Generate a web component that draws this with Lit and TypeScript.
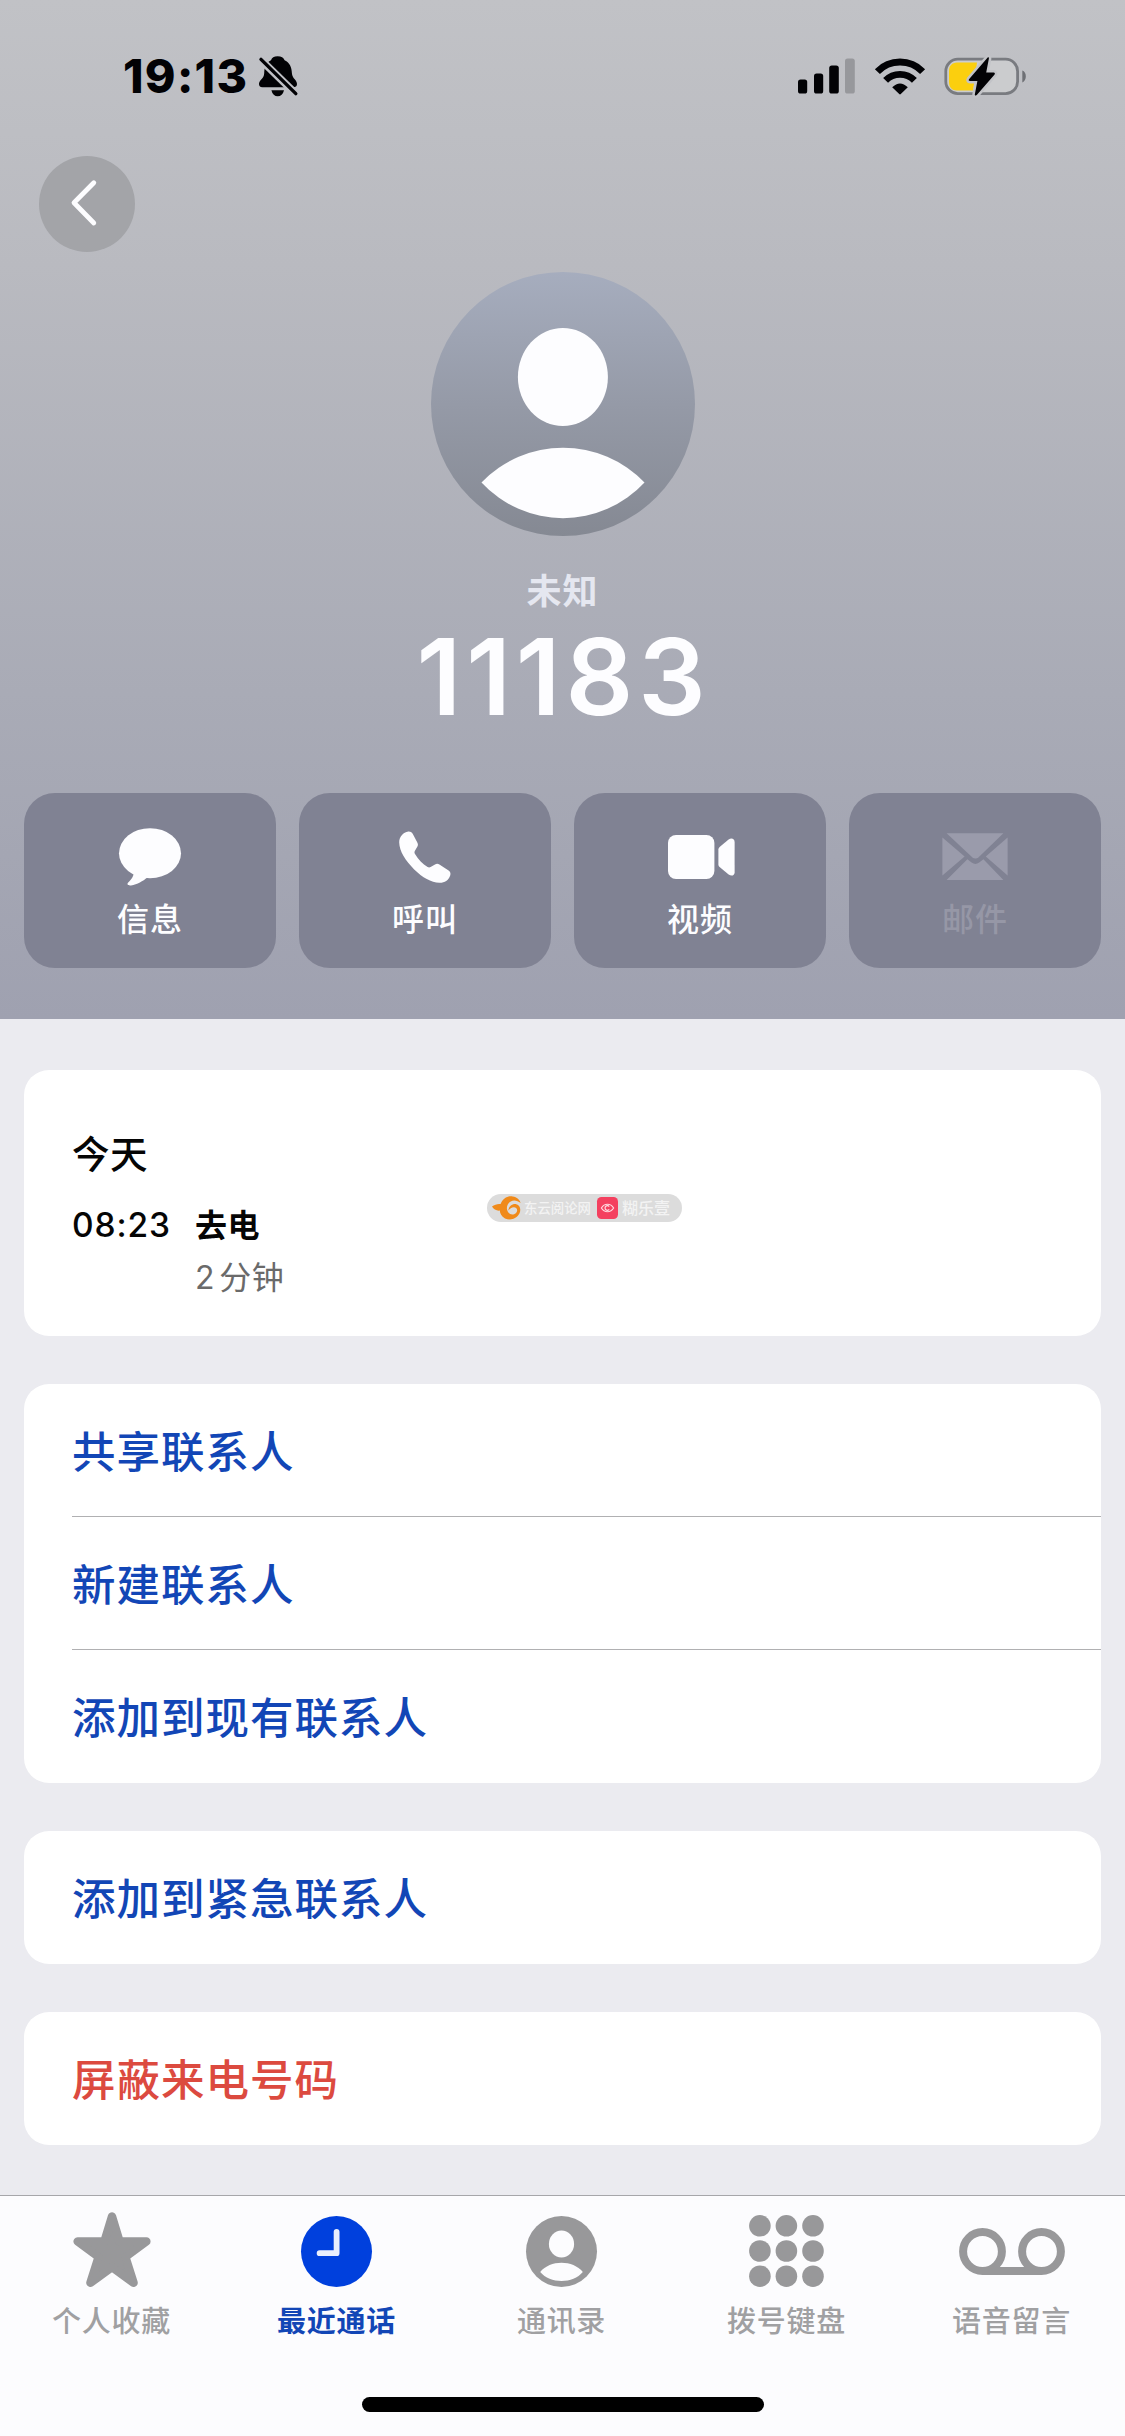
import { LitElement, html, css, svg, SVGTemplateResult } from "lit";
import { customElement } from "lit/decorators.js";
import { classMap } from "lit/directives/class-map.js";

interface Glyph {
  w: number;
  h: number;
  body: SVGTemplateResult;
}

const glyphs: Record<string, Glyph> = {
  bell: {
    w: 39,
    h: 41,
    body: svg`
      <path d="M18.6 0.2C22.4 0.2 24.6 1.8 25.6 4.2C31 6.6 32.6 11.4 32.9 17.2C33.2 22.6 37.9 23.6 38 28C38 30.2 36.6 31.3 34.2 31.3H3.4C1 31.3 -0.2 29.8 0 27.6C0.6 23.6 4.9 22.8 5.2 17.2C5.4 11.2 6.8 6.6 12 4.2C12.8 1.8 15 0.2 18.6 0.2Z"/>
      <path d="M12.4 34.2H25C24 38.2 21.8 40.2 18.7 40.2C15.6 40.2 13.4 38.2 12.4 34.2Z"/>
      <path d="M-2 0L40 41" stroke="#bfc0c5" stroke-width="7.6"/>
      <path d="M2 3.4L36.8 37.6" stroke="currentColor" stroke-width="3.4" stroke-linecap="round"/>`,
  },
  signal: {
    w: 58,
    h: 36,
    body: svg`
      <rect x="0" y="21.5" width="9.2" height="14" rx="2.6"/>
      <rect x="16" y="15.5" width="9.2" height="20" rx="2.6"/>
      <rect x="31.2" y="7.5" width="9.6" height="28" rx="2.6"/>
      <rect x="47" y="0.5" width="9.8" height="35" rx="2.6" fill="#97989c"/>`,
  },
  wifi: {
    w: 50,
    h: 37,
    body: svg`
      <g fill="none" stroke="currentColor" stroke-width="7">
        <path d="M2.4 13.6A31.6 31.6 0 0 1 47.6 13.6"/>
        <path d="M10.6 22.4A20 20 0 0 1 39.4 22.4" stroke-width="6.8"/>
      </g>
      <path d="M17.2 29.2Q25 21.6 32.8 29.2L25.8 36Q25 36.8 24.2 36Z"/>`,
  },
  battery: {
    w: 83,
    h: 39,
    body: svg`
      <rect x="1.8" y="2.2" width="71.8" height="34.4" rx="12" fill="#cbccce" stroke="#797b80" stroke-width="2.8"/>
      <path d="M13 5.5H33L29 33.5H13C8 33.5 5 30 5 25V14C5 9 8 5.5 13 5.5Z" fill="#fbcf0e"/>
      <path d="M78.3 13.6C83 15 83 24 78.3 25.4Z" fill="#6e7075"/>
      <path d="M43.7 0.6L25 22.3C24.4 23.2 24.8 24 26 24H33.4L30.8 37.4C30.8 38.8 32 39 33 37.8L50.6 17.4C51.2 16.4 50.8 15.6 49.6 15.6H42.2L44.9 1.6C45 0.4 44.4 0 43.7 0.6Z" stroke="#c2c3c7" stroke-width="5" paint-order="stroke"/>`,
  },
  back: {
    w: 26,
    h: 46,
    body: svg`<path d="M22.8 2.8L3 22.8L22.8 43" fill="none" stroke="currentColor" stroke-width="4.8" stroke-linecap="round" stroke-linejoin="round"/>`,
  },
  avatar: {
    w: 264,
    h: 264,
    body: svg`
      <defs>
        <linearGradient id="disc" x1="0" y1="0" x2="0" y2="1">
          <stop offset="0" stop-color="#a6adbe"/>
          <stop offset="0.5" stop-color="#959aa7"/>
          <stop offset="1" stop-color="#858993"/>
        </linearGradient>
      </defs>
      <circle cx="132" cy="132" r="132" fill="url(#disc)"/>
      <ellipse cx="131.9" cy="105" rx="45" ry="49"/>
      <path d="M50.5 210.5A113 113 0 0 1 213.5 210.5A111 111 0 0 1 50.5 210.5Z"/>`,
  },
  message: {
    w: 62,
    h: 58,
    body: svg`
      <ellipse cx="31" cy="25.2" rx="31" ry="25"/>
      <path d="M14.4 44C15.4 48 12 51.6 9.2 54.6C7.6 56.4 9 57.8 12 57.4C18.6 56.4 23.6 53 28.4 49.4Z"/>`,
  },
  phone: {
    w: 52,
    h: 52,
    body: svg`<path d="M9.4 0.5C11 0.3 12.6 1 13.7 2.8L18.3 11.6C19.2 13.2 19.1 14.4 18.3 15.8L15.8 20C15.3 21 15.4 22 16 23C19.4 28.6 23.6 32.8 28.6 36C29.6 36.6 30.6 36.6 31.6 36L36 33.4C37.6 32.5 39 32.6 40.4 33.5L49.6 39.4C51.4 40.6 51.9 42.4 51.2 44.4C49.4 49.2 45.8 51.8 40.4 51.7C32.2 51.5 23.4 46.4 15.2 38.4C6.6 30 0.4 20.4 0.2 11.6C0.1 6 4.2 1 9.4 0.5Z"/>`,
  },
  video: {
    w: 64,
    h: 44,
    body: svg`
      <rect x="0" y="0" width="46.4" height="44" rx="8"/>
      <path d="M50.4 14.6Q50.4 13 51.6 12L60.6 4.6C63.4 2.6 66.6 3.8 66.6 7V37.4C66.6 40.4 63.4 41.6 60.6 39.4L51.6 32Q50.4 31 50.4 29.4Z"/>`,
  },
  mail: {
    w: 66,
    h: 48,
    body: svg`
      <path d="M4.6 0.3H61.4L36.6 24.2Q33.4 27 30.2 24.2Z"/>
      <path d="M0.4 4.6L22.6 23.6L0.4 42.6Z"/>
      <path d="M65.6 4.6L43.8 23.6L65.6 42.6Z"/>
      <path d="M4.6 47L25.4 26.2L29.6 29.6Q33.4 32.4 37.2 29.6L41.4 26.2L61.4 47Z"/>`,
  },
  star: {
    w: 78,
    h: 80,
    body: svg`<path d="M39 5.4L46.6 30.4H73.4L52.4 46L60.6 71.8L39 56L17.4 71.8L25.6 46L4.6 30.4H31.4Z" stroke="currentColor" stroke-width="8.4" stroke-linejoin="round"/>`,
  },
  clock: {
    w: 71,
    h: 71,
    body: svg`
      <circle cx="35.5" cy="35.5" r="35.5"/>
      <path d="M35.6 15.8V37.2H18.6" fill="none" stroke="#e9effd" stroke-width="5.8" stroke-linecap="round" stroke-linejoin="round"/>`,
  },
  contact: {
    w: 71,
    h: 71,
    body: svg`
      <circle cx="35.5" cy="35.5" r="35.5"/>
      <g fill="#fcfcfe">
        <ellipse cx="35.5" cy="28" rx="12.6" ry="13.4"/>
        <path d="M14.2 56C24 43.6 47 43.6 56.8 56C47 68 24 68 14.2 56Z"/>
      </g>`,
  },
  keypad: {
    w: 75,
    h: 72,
    body: svg`${[10.8, 36, 61.2].map((cy) =>
      [10.9, 37.4, 64].map((cx) => svg`<circle cx=${cx} cy=${cy} r="10.8"/>`)
    )}`,
  },
  voicemail: {
    w: 106,
    h: 47,
    body: svg`
      <g fill="none" stroke="currentColor" stroke-width="8">
        <circle cx="23.5" cy="23.5" r="19.4"/>
        <circle cx="82.5" cy="23.5" r="19.4"/>
        <path d="M23.5 42.9H82.5"/>
      </g>`,
  },
  swirl: {
    w: 30,
    h: 24,
    body: svg`
      <path fill-rule="evenodd" d="M8.6 8C11 2 16 -0.4 20.6 0.4C25 1 27.8 3.6 28.6 7C24.6 3.4 18.6 3.2 15.8 8.4C14.4 11 14.6 14 16.4 16.6C18.2 19 21.6 19 23.8 17.2C26 15 25.4 11.8 22.8 11.4C20 11 18 12.6 16.4 14.6C16.6 10.4 20 7.8 23.6 8C28 8.6 29.4 13.4 27.4 17.6C24.8 22.8 18.4 25 13 22.4C9.4 20.6 8 17.6 7.8 14.6C4.6 15 1.6 13.4 0 10.6C2.6 8.4 5.8 7.6 8.6 8Z"/>`,
  },
  eye: {
    w: 21,
    h: 22,
    body: svg`
      <rect width="21" height="22" rx="4.5" fill="#f4405f"/>
      <g fill="none" stroke="#ffd9df" stroke-width="1.2">
        <path d="M4.4 11C7.4 6 13.6 6 16.6 11C13.6 16 7.4 16 4.4 11Z"/>
        <path d="M12.2 9.6A2.3 2.3 0 1 0 12.2 12.4"/>
      </g>`,
  },
};

const icon = (name: string) => {
  const g = glyphs[name];
  return html`<svg
    class="icon"
    width=${g.w}
    height=${g.h}
    viewBox="0 0 ${g.w} ${g.h}"
    fill="currentColor"
    aria-hidden="true"
  >${g.body}</svg>`;
};

const actions = [
  { name: "message", label: "信息", off: false },
  { name: "phone", label: "呼叫", off: false },
  { name: "video", label: "视频", off: false },
  { name: "mail", label: "邮件", off: true },
];

const groups = [
  { danger: false, rows: ["共享联系人", "新建联系人", "添加到现有联系人"] },
  { danger: false, rows: ["添加到紧急联系人"] },
  { danger: true, rows: ["屏蔽来电号码"] },
];

const tabs = [
  { name: "star", label: "个人收藏", on: false },
  { name: "clock", label: "最近通话", on: true },
  { name: "contact", label: "通讯录", on: false },
  { name: "keypad", label: "拨号键盘", on: false },
  { name: "voicemail", label: "语音留言", on: false },
];

@customElement("app-root")
export class AppRoot extends LitElement {
  static styles = css`
    :host {
      display: flex;
      flex-direction: column;
      width: 1125px;
      height: 2436px;
      overflow: hidden;
      background: #ebebf0;
      color: #050505;
      font-family: Inter, "Noto Sans CJK SC", sans-serif;
      font-weight: 500;
    }
    * {
      box-sizing: border-box;
    }
    .icon {
      display: block;
      flex: none;
      overflow: visible;
    }
    .hero {
      flex: none;
      height: 1019px;
      padding: 48px 24px 0;
      display: flex;
      flex-direction: column;
      align-items: center;
      color: #fdfdff;
      background: linear-gradient(#c1c2c6 0%, #b9bac0 26%, #a9abb6 68%, #9fa1b0 100%);
    }
    .status {
      align-self: stretch;
      height: 56px;
      padding: 0 74px 0 99px;
      display: flex;
      align-items: center;
      color: #020205;
    }
    .time {
      width: 130px;
      font-size: 46.5px;
      font-weight: 800;
      line-height: 56px;
      letter-spacing: 1.3px;
      margin-right: 6px;
      white-space: nowrap;
    }
    .indicators {
      margin-left: auto;
      display: flex;
      align-items: center;
      gap: 19px;
    }
    .back {
      align-self: flex-start;
      margin: 52px 0 0 15px;
      width: 96px;
      height: 96px;
      padding: 0 7px 2px 0;
      border-radius: 50%;
      background: #a3a4a8;
      display: flex;
      align-items: center;
      justify-content: center;
    }
    .avatar {
      margin-top: 20px;
    }
    .kind {
      margin-top: 33px;
      font-size: 35px;
      line-height: 44px;
      font-weight: 700;
      letter-spacing: 1px;
      color: #e5e7f0;
    }
    .number {
      margin-top: 14px;
      padding-left: 2px;
      font-size: 106px;
      line-height: 100px;
      font-weight: 600;
      letter-spacing: 4.8px;
    }
    .actions {
      align-self: stretch;
      margin-top: 66px;
      display: grid;
      grid-template-columns: repeat(4, 252px);
      justify-content: space-between;
    }
    .action {
      height: 175px;
      padding-top: 32px;
      border-radius: 31px;
      background: #808293;
      display: flex;
      flex-direction: column;
      align-items: center;
    }
    .action.off {
      color: #9a9bab;
    }
    .slot {
      height: 64px;
      display: flex;
      align-items: center;
    }
    .caption {
      margin-top: 11px;
      font-size: 32px;
      line-height: 40px;
      letter-spacing: 1px;
    }
    .action.off .caption {
      color: #9697a6;
    }
    .cards {
      flex: 1;
      padding: 51px 24px 0;
      display: flex;
      flex-direction: column;
      gap: 48px;
    }
    .card {
      border-radius: 25px;
      background: #fff;
      overflow: hidden;
    }
    .log {
      position: relative;
      height: 266px;
      padding: 60px 48px 0;
    }
    .day {
      font-size: 37.5px;
      line-height: 50px;
      letter-spacing: 0.5px;
    }
    .entry {
      margin-top: 26px;
      display: grid;
      grid-template-columns: 123px auto;
      row-gap: 12px;
      font-size: 32px;
      line-height: 40px;
      letter-spacing: 0.6px;
    }
    .clock {
      font-size: 33.5px;
      line-height: 38px;
      letter-spacing: 0.9px;
    }
    .way {
      font-weight: 700;
    }
    .span {
      grid-column: 2;
      color: #6a6a6a;
      font-weight: 400;
      word-spacing: -5.5px;
    }
    .mark {
      position: absolute;
      left: 463px;
      top: 124px;
      width: 195px;
      height: 28px;
      padding: 0 5px;
      border-radius: 14px;
      background: #dcdcdc;
      color: #f3f3f3;
      display: flex;
      align-items: center;
      font-size: 14px;
      line-height: 22px;
    }
    .swirl {
      color: #f08a1a;
    }
    .site {
      margin: 0 5px 0 2px;
      width: 68px;
      white-space: nowrap;
      font-size: 13.4px;
    }
    .brand {
      margin-left: 4px;
      font-size: 16px;
      white-space: nowrap;
    }
    .row {
      height: 133px;
      margin-left: 48px;
      padding-top: 3px;
      font-size: 43.5px;
      line-height: 131px;
      letter-spacing: 1px;
      color: #1246b6;
    }
    .row:not(:last-child) {
      border-bottom: 1px solid #b0b0b2;
    }
    .row:last-child {
      line-height: 130px;
    }
    .danger .row {
      color: #dc4a3f;
    }
    .tabs {
      flex: none;
      height: 241px;
      border-top: 1px solid #a6a6aa;
      background: #fcfcfe;
      display: flex;
      flex-direction: column;
      align-items: center;
      justify-content: space-between;
      padding-bottom: 24px;
    }
    .strip {
      align-self: stretch;
      margin: 0 1px 0 -1px;
      padding-top: 15px;
      display: grid;
      grid-template-columns: repeat(5, 1fr);
    }
    .tab {
      display: flex;
      flex-direction: column;
      align-items: center;
      color: #98989a;
    }
    .tab.on {
      color: #0040dd;
    }
    .perch {
      height: 80px;
      display: flex;
      align-items: center;
    }
    .name {
      margin-top: 13px;
      font-size: 29px;
      line-height: 36px;
      letter-spacing: 0.7px;
      color: #a0a0a2;
    }
    .tab.on .name {
      color: #1246b6;
      font-weight: 700;
    }
    .home {
      width: 402px;
      height: 15px;
      border-radius: 8px;
      background: #000;
    }
  `;

  render() {
    return html`
      <header class="hero">
        <div class="status">
          <span class="time">19:13</span>
          ${icon("bell")}
          <div class="indicators">${icon("signal")}${icon("wifi")}${icon("battery")}</div>
        </div>
        <div class="back">${icon("back")}</div>
        <div class="avatar">${icon("avatar")}</div>
        <div class="kind">未知</div>
        <div class="number">11183</div>
        <div class="actions">
          ${actions.map(
            (a) => html`<div class=${classMap({ action: true, off: a.off })}>
              <div class="slot">${icon(a.name)}</div>
              <div class="caption">${a.label}</div>
            </div>`
          )}
        </div>
      </header>
      <main class="cards">
        <section class="card log">
          <div class="day">今天</div>
          <div class="entry">
            <span class="clock">08:23</span>
            <span class="way">去电</span>
            <span class="span">2 分钟</span>
          </div>
          <div class="mark">
            <span class="swirl">${icon("swirl")}</span>
            <span class="site">东云阅论网</span>
            ${icon("eye")}
            <span class="brand">糊乐壹</span>
          </div>
        </section>
        ${groups.map(
          (g) => html`<section class=${classMap({ card: true, danger: g.danger })}>
            ${g.rows.map((r) => html`<div class="row">${r}</div>`)}
          </section>`
        )}
      </main>
      <nav class="tabs">
        <div class="strip">
          ${tabs.map(
            (t) => html`<div class=${classMap({ tab: true, on: t.on })}>
              <div class="perch">${icon(t.name)}</div>
              <div class="name">${t.label}</div>
            </div>`
          )}
        </div>
        <div class="home"></div>
      </nav>
    `;
  }
}
